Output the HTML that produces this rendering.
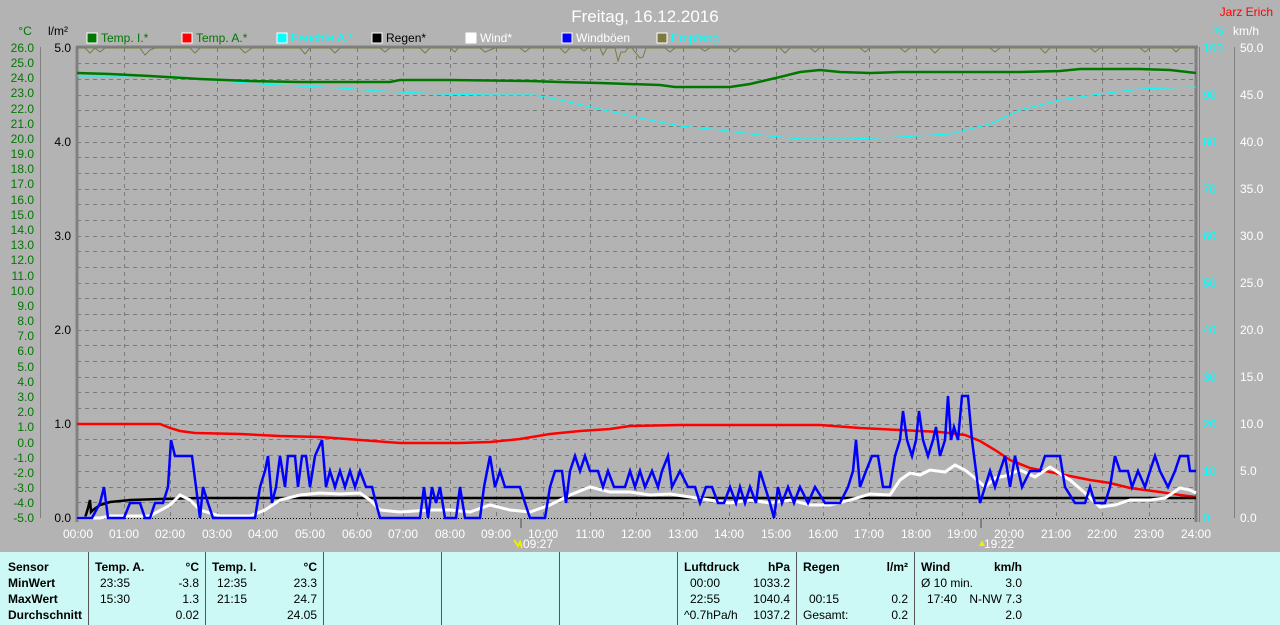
<!DOCTYPE html>
<html><head><meta charset="utf-8"><style>
html,body{margin:0;padding:0;background:#b3b3b3;width:1280px;height:625px;overflow:hidden;font-family:"Liberation Sans",sans-serif}
svg{position:absolute;left:0;top:0}
#panel{position:absolute;left:0;top:552px;width:1280px;height:73px;background:#ccf9f5}
.c{position:absolute;top:0;height:73px;border-right:1px solid #555;font-size:12px;color:#000}
.r{position:absolute;white-space:nowrap}
.b{font-weight:bold}
</style></head><body>
<svg width="1280" height="552" xmlns="http://www.w3.org/2000/svg" font-family="Liberation Sans, sans-serif">
<text x="645" y="22" fill="#fff" font-size="17" text-anchor="middle">Freitag, 16.12.2016</text>
<text x="1273" y="16" fill="#f00" font-size="12" text-anchor="end">Jarz Erich</text>
<g font-size="12">
<rect x="87" y="33" width="10" height="10" fill="#007800" stroke="#fff"/><text x="101" y="42" fill="#007800">Temp. I.*</text>
<rect x="182" y="33" width="10" height="10" fill="#f00" stroke="#fff"/><text x="196" y="42" fill="#007800">Temp. A.*</text>
<rect x="277" y="33" width="10" height="10" fill="#0ff" stroke="#fff"/><text x="291" y="42" fill="#0ff">Feuchte A.*</text>
<rect x="372" y="33" width="10" height="10" fill="#000" stroke="#fff"/><text x="386" y="42" fill="#000">Regen*</text>
<rect x="466" y="33" width="10" height="10" fill="#fff" stroke="#fff"/><text x="480" y="42" fill="#fff">Wind*</text>
<rect x="562" y="33" width="10" height="10" fill="#00f" stroke="#fff"/><text x="576" y="42" fill="#fff">Windböen</text>
<rect x="657" y="33" width="10" height="10" fill="#7b7b40" stroke="#fff"/><text x="671" y="42" fill="#0ff">Empfang</text>
<text x="25" y="35" fill="#007800" text-anchor="middle">°C</text>
<text x="58" y="35" fill="#000" text-anchor="middle">l/m²</text>
<text x="1218" y="35" fill="#0ff" text-anchor="middle">%</text>
<text x="1246" y="35" fill="#fff" text-anchor="middle">km/h</text>
</g>
<!-- grid -->
<g stroke="#7a7a7a" stroke-dasharray="4,4" stroke-width="1" shape-rendering="crispEdges">
<path d="M124.5 48V518M170.5 48V518M217.5 48V518M263.5 48V518M310.5 48V518M357.5 48V518M403.5 48V518M450.5 48V518M496.5 48V518M543.5 48V518M590.5 48V518M636.5 48V518M683.5 48V518M729.5 48V518M776.5 48V518M823.5 48V518M869.5 48V518M916.5 48V518M962.5 48V518M1009.5 48V518M1056.5 48V518M1102.5 48V518M1149.5 48V518"/>
<path d="M77 63.5H1196M77 79.5H1196M77 95.5H1196M77 110.5H1196M77 126.5H1196M77 142.5H1196M77 157.5H1196M77 173.5H1196M77 189.5H1196M77 204.5H1196M77 220.5H1196M77 236.5H1196M77 251.5H1196M77 267.5H1196M77 283.5H1196M77 298.5H1196M77 314.5H1196M77 330.5H1196M77 345.5H1196M77 361.5H1196M77 377.5H1196M77 392.5H1196M77 408.5H1196M77 424.5H1196M77 439.5H1196M77 455.5H1196M77 471.5H1196M77 487.5H1196M77 502.5H1196"/>
</g>
<!-- axes -->
<g stroke="#808080" fill="none" shape-rendering="crispEdges">
<path d="M77 47V522M76 47H1198" stroke-width="3"/>
<path d="M1196 47V522" stroke-width="3"/>
<path d="M1199.5 47V522" stroke-width="1"/>
<path d="M40.5 47V518M1234.5 47V518" stroke-width="1"/>
</g>
<path d="M77 518.5H1196" stroke="#000" stroke-dasharray="1,2" shape-rendering="crispEdges"/>
<g font-size="12" fill="#007800" text-anchor="end">
<text x="34" y="52">26.0</text><text x="34" y="67">25.0</text><text x="34" y="82">24.0</text><text x="34" y="97">23.0</text><text x="34" y="113">22.0</text><text x="34" y="128">21.0</text><text x="34" y="143">20.0</text><text x="34" y="158">19.0</text><text x="34" y="173">18.0</text><text x="34" y="188">17.0</text><text x="34" y="204">16.0</text><text x="34" y="219">15.0</text><text x="34" y="234">14.0</text><text x="34" y="249">13.0</text><text x="34" y="264">12.0</text><text x="34" y="280">11.0</text><text x="34" y="295">10.0</text><text x="34" y="310">9.0</text><text x="34" y="325">8.0</text><text x="34" y="340">7.0</text><text x="34" y="355">6.0</text><text x="34" y="371">5.0</text><text x="34" y="386">4.0</text><text x="34" y="401">3.0</text><text x="34" y="416">2.0</text><text x="34" y="431">1.0</text><text x="34" y="447">0.0</text><text x="34" y="462">-1.0</text><text x="34" y="477">-2.0</text><text x="34" y="492">-3.0</text><text x="34" y="507">-4.0</text><text x="34" y="522">-5.0</text>
</g>
<g font-size="12" fill="#000" text-anchor="end">
<text x="71" y="52">5.0</text><text x="71" y="146">4.0</text><text x="71" y="240">3.0</text><text x="71" y="334">2.0</text><text x="71" y="428">1.0</text><text x="71" y="522">0.0</text>
</g>
<g font-size="12" fill="#0ff">
<text x="1203" y="52">100</text><text x="1203" y="99">90</text><text x="1203" y="146">80</text><text x="1203" y="193">70</text><text x="1203" y="240">60</text><text x="1203" y="287">50</text><text x="1203" y="334">40</text><text x="1203" y="381">30</text><text x="1203" y="428">20</text><text x="1203" y="475">10</text><text x="1203" y="522">0</text>
</g>
<g font-size="12" fill="#fff">
<text x="1240" y="52">50.0</text><text x="1240" y="99">45.0</text><text x="1240" y="146">40.0</text><text x="1240" y="193">35.0</text><text x="1240" y="240">30.0</text><text x="1240" y="287">25.0</text><text x="1240" y="334">20.0</text><text x="1240" y="381">15.0</text><text x="1240" y="428">10.0</text><text x="1240" y="475">5.0</text><text x="1240" y="522">0.0</text>
</g>
<g font-size="12" fill="#fff" text-anchor="middle">
<text x="78" y="538">00:00</text><text x="124" y="538">01:00</text><text x="170" y="538">02:00</text><text x="217" y="538">03:00</text><text x="263" y="538">04:00</text><text x="310" y="538">05:00</text><text x="357" y="538">06:00</text><text x="403" y="538">07:00</text><text x="450" y="538">08:00</text><text x="496" y="538">09:00</text><text x="543" y="538">10:00</text><text x="590" y="538">11:00</text><text x="636" y="538">12:00</text><text x="683" y="538">13:00</text><text x="729" y="538">14:00</text><text x="776" y="538">15:00</text><text x="823" y="538">16:00</text><text x="869" y="538">17:00</text><text x="916" y="538">18:00</text><text x="962" y="538">19:00</text><text x="1009" y="538">20:00</text><text x="1056" y="538">21:00</text><text x="1102" y="538">22:00</text><text x="1149" y="538">23:00</text><text x="1196" y="538">24:00</text>
<text x="538" y="548">09:27</text><text x="999" y="548">19:22</text>
</g>
<path d="M521 518V528M981 518V528" stroke="#808080" stroke-width="2"/>
<path d="M514 540l4 6 2-4 2 6" stroke="#ee0" stroke-width="2" fill="none"/>
<path d="M982 540l-3 6h6z" fill="#ee0"/>
<!-- Empfang -->
<polyline fill="none" stroke="#7b7b40" stroke-width="1" points="77,48 85,48 90,53 95,48 100,52 105,48 140,48 145,55 150,50 155,48 190,48 195,53 200,48 240,48 245,53 252,48 300,48 305,54 310,48 330,48 335,53 340,48 380,48 385,52 390,48 420,48 425,53 430,48 450,48 455,52 458,48 480,48 485,52 490,50 495,48 520,48 525,52 530,48 560,48 565,53 570,48 580,48 584,51 588,48 600,48 603,55 607,48 615,48 618,61 621,52 625,52 628,48 632,48 635,52 640,58 643,57 646,48 665,48 670,52 675,48 700,48 705,51 710,48 730,48 735,52 740,48 780,48 785,53 790,48 810,48 815,52 820,48 860,48 865,52 870,48 900,48 905,52 910,48 930,48 935,53 940,48 990,48 995,52 1000,48 1040,48 1045,53 1050,48 1090,48 1095,52 1100,48 1140,48 1145,52 1150,48 1172,48 1176,52 1180,48 1196,48"/>
<!-- humidity -->
<polyline fill="none" stroke="#0ff" stroke-width="1" points="77,76 120,76 170,76 210,80 260,84 300,86 340,88 380,91 420,93 440,94 490,95 535,95 560,100 600,109 640,118 680,126 720,130 760,135 800,139 850,139 900,137 950,134 990,124 1020,110 1060,100 1100,94 1140,89 1196,87"/>
<!-- temp I -->
<polyline fill="none" stroke="#007800" stroke-width="2.5" points="77,73 110,74 150,76 200,79 250,81 300,82 350,82 390,82 400,80 450,80 530,81 560,82 600,83 660,85 675,87 700,87 730,87 750,84 780,77 800,72 820,70 840,72 870,73 900,72 940,72 980,72 1020,72 1060,71 1080,69 1140,69 1170,70 1196,73"/>
<!-- temp A -->
<polyline fill="none" stroke="#f00" stroke-width="2.5" points="77,424 160,424 170,428 180,431 195,433 240,434 280,436 320,437 360,440 400,443 460,443 490,442 520,439 550,434 580,431 610,429 630,426 680,425 820,425 860,428 900,430 940,432 965,435 980,441 995,450 1010,460 1030,468 1060,474 1090,480 1110,483 1130,488 1160,492 1180,495 1196,497"/>
<!-- rain -->
<polyline fill="none" stroke="#000" stroke-width="2.5" points="77,518 85,518 88,508 90,500 91,512 93,510 100,505 110,502 130,500 160,499 200,498 1196,498"/>
<!-- wind -->
<polyline fill="none" stroke="#fff" stroke-width="3" points="77,518 100,518 110,516 150,516 170,505 180,495 190,500 200,510 220,516 250,516 265,510 280,500 300,495 320,493 340,494 360,493 370,500 380,510 400,512 430,510 450,510 470,512 490,505 510,510 530,512 550,505 570,495 590,487 610,492 630,492 650,495 670,494 690,497 710,500 730,503 750,500 770,503 790,500 810,505 830,505 850,500 870,494 890,495 900,480 910,473 920,475 930,470 945,472 955,465 965,470 975,478 985,487 995,478 1005,476 1020,470 1035,477 1050,467 1062,475 1070,480 1085,493 1100,507 1115,505 1130,500 1150,500 1165,498 1180,488 1190,490 1196,493"/>
<!-- gusts -->
<polyline fill="none" stroke="#00f" stroke-width="2.5" points="77,518 92,518 100,503 104,487 108,518 124,518 130,503 140,503 145,518 150,518 155,503 163,503 168,487 171,440 175,456 192,456 196,487 200,518 203,487 208,503 213,518 255,518 260,487 265,471 268,456 272,503 276,487 280,456 285,487 288,456 295,456 298,487 302,456 306,456 310,487 315,456 322,440 326,487 330,471 335,487 340,471 345,487 350,471 355,487 360,471 366,487 372,487 376,503 380,518 420,518 424,487 428,518 432,487 436,503 440,487 445,518 456,518 460,487 465,518 480,518 484,487 490,456 495,487 500,471 505,487 520,487 525,503 530,518 545,518 550,487 555,471 562,471 566,503 570,471 575,456 580,471 585,456 590,471 598,471 603,487 608,471 614,487 625,487 630,471 635,487 640,471 645,487 652,471 658,487 662,471 668,456 672,487 680,471 688,487 695,487 700,503 706,487 712,487 718,503 724,503 730,487 736,503 740,487 745,503 750,487 756,503 760,471 765,487 770,503 774,518 778,487 782,503 788,487 794,503 800,487 808,503 815,487 825,503 840,503 848,487 853,471 856,440 860,487 866,471 872,456 878,456 883,487 890,487 895,456 900,440 903,411 907,440 912,456 916,440 919,411 923,440 928,456 933,440 936,427 940,456 945,440 948,396 951,440 954,427 958,440 962,396 968,396 972,440 976,471 980,503 985,487 990,471 995,487 1000,471 1005,456 1010,487 1015,456 1022,487 1030,471 1040,471 1045,456 1060,456 1065,487 1075,503 1085,503 1090,487 1095,503 1105,503 1110,487 1115,456 1120,471 1128,471 1132,487 1138,471 1145,487 1150,471 1155,456 1160,471 1168,487 1175,471 1180,456 1188,456 1190,471 1196,471"/>
</svg>
<div id="panel">
<div class="c" style="left:0;width:88px"><div class="r b" style="left:8px;top:8px">Sensor</div><div class="r b" style="left:8px;top:24px">MinWert</div><div class="r b" style="left:8px;top:40px">MaxWert</div><div class="r b" style="left:8px;top:56px">Durchschnitt</div></div>
<div class="c" style="left:89px;width:116px"><div class="r b" style="left:6px;top:8px">Temp. A.</div><div class="r b" style="right:6px;top:8px">°C</div><div class="r" style="left:11px;top:24px">23:35</div><div class="r" style="right:6px;top:24px">-3.8</div><div class="r" style="left:11px;top:40px">15:30</div><div class="r" style="right:6px;top:40px">1.3</div><div class="r" style="right:6px;top:56px">0.02</div></div>
<div class="c" style="left:206px;width:117px"><div class="r b" style="left:6px;top:8px">Temp. I.</div><div class="r b" style="right:6px;top:8px">°C</div><div class="r" style="left:11px;top:24px">12:35</div><div class="r" style="right:6px;top:24px">23.3</div><div class="r" style="left:11px;top:40px">21:15</div><div class="r" style="right:6px;top:40px">24.7</div><div class="r" style="right:6px;top:56px">24.05</div></div>
<div class="c" style="left:324px;width:117px"></div>
<div class="c" style="left:442px;width:117px"></div>
<div class="c" style="left:560px;width:117px"></div>
<div class="c" style="left:678px;width:118px"><div class="r b" style="left:6px;top:8px">Luftdruck</div><div class="r b" style="right:6px;top:8px">hPa</div><div class="r" style="left:12px;top:24px">00:00</div><div class="r" style="right:6px;top:24px">1033.2</div><div class="r" style="left:12px;top:40px">22:55</div><div class="r" style="right:6px;top:40px">1040.4</div><div class="r" style="left:6px;top:56px">^0.7hPa/h</div><div class="r" style="right:6px;top:56px">1037.2</div></div>
<div class="c" style="left:797px;width:117px"><div class="r b" style="left:6px;top:8px">Regen</div><div class="r b" style="right:6px;top:8px">l/m²</div><div class="r" style="left:12px;top:40px">00:15</div><div class="r" style="right:6px;top:40px">0.2</div><div class="r" style="left:6px;top:56px">Gesamt:</div><div class="r" style="right:6px;top:56px">0.2</div></div>
<div class="c" style="left:915px;width:113px;border-right:none"><div class="r b" style="left:6px;top:8px">Wind</div><div class="r b" style="right:6px;top:8px">km/h</div><div class="r" style="left:6px;top:24px">Ø 10 min.</div><div class="r" style="right:6px;top:24px">3.0</div><div class="r" style="left:12px;top:40px">17:40</div><div class="r" style="right:6px;top:40px">N-NW 7.3</div><div class="r" style="right:6px;top:56px">2.0</div></div>
</div>
</body></html>
